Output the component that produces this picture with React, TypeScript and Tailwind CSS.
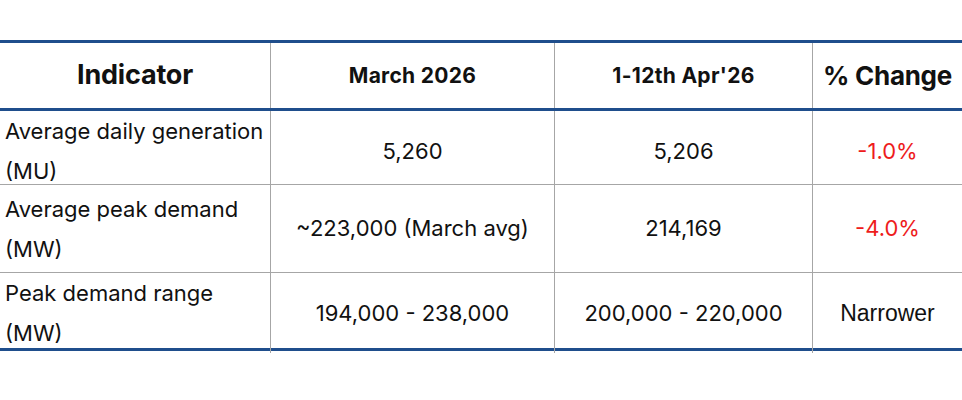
import React from 'react';

// Table rows: label lines, two values and the change column
const rows = [
  { label: ['Average daily generation', '(MU)'], march: '5,260', april: '5,206', change: '-1.0%', red: true, h: 'h-[73px]' },
  { label: ['Average peak demand', '(MW)'], march: '~223,000 (March avg)', april: '214,169', change: '-4.0%', red: true, h: 'h-[88px]' },
  { label: ['Peak demand range', '(MW)'], march: '194,000 - 238,000', april: '200,000 - 220,000', change: 'Narrower', red: false, h: 'h-[76px]' },
];

const grid = 'grid grid-cols-[270px_284px_258px_150px]';

const App = () => {
  return (
    <div className="w-[962px] h-[400px] bg-white pt-[40px] text-[#111] font-['Inter','Liberation_Sans',sans-serif]">
      <div className="border-t-[3px] border-b-[3px] border-[#1f4e8c]">
        {/* header */}
        <div className={`${grid} h-[68px] border-b-[3px] border-[#1f4e8c]`}>
          <div className="flex items-center justify-center text-[27px] font-bold tracking-[-0.2px]">Indicator</div>
          <div className="flex items-center justify-center border-l border-[#a6a6a6] text-[21px] font-bold tracking-[0.3px]">March 2026</div>
          <div className="flex items-center justify-center border-l border-[#a6a6a6] text-[21px] font-bold tracking-[0.3px]">1-12th Apr'26</div>
          <div className="flex items-center justify-center border-l border-[#a6a6a6] text-[26px] font-bold tracking-[-0.3px]">% Change</div>
        </div>
        {rows.map((row, i) => (
          <div
            key={row.label[0]}
            className={`${grid} ${row.h} text-[22px] ${i > 0 ? 'border-t border-[#a6a6a6]' : ''}`}
          >
            <div className="flex flex-col justify-center pl-[5px] leading-[40px]">
              {row.label.map((l) => (
                <span key={l} className="whitespace-nowrap">{l}</span>
              ))}
            </div>
            <div className="flex items-center justify-center border-l border-[#a6a6a6]">{row.march}</div>
            <div className="flex items-center justify-center border-l border-[#a6a6a6]">{row.april}</div>
            <div
              className={`flex items-center justify-center border-l border-[#a6a6a6] ${
                row.red ? 'text-[#ee1c1c]' : "font-['Liberation_Sans',sans-serif] text-[23px]"
              }`}
            >
              {row.change}
            </div>
          </div>
        ))}
      </div>
    </div>
  );
};

export default App;
